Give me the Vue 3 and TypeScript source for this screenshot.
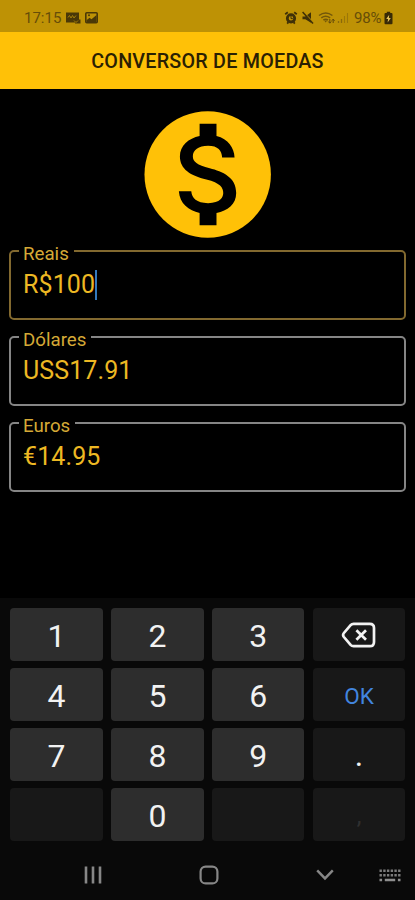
<script setup lang="ts">
interface Field {
  label: string
  value: string
  active: boolean
}

interface Key {
  label: string
  kind: 'digit' | 'dark' | 'ok' | 'erase' | 'point' | 'comma'
}

const fields: Field[] = [
  { label: 'Reais', value: 'R$100', active: true },
  { label: 'Dólares', value: 'USS17.91', active: false },
  { label: 'Euros', value: '€14.95', active: false },
]

const keys: Key[] = [
  { label: '1', kind: 'digit' },
  { label: '2', kind: 'digit' },
  { label: '3', kind: 'digit' },
  { label: '', kind: 'erase' },
  { label: '4', kind: 'digit' },
  { label: '5', kind: 'digit' },
  { label: '6', kind: 'digit' },
  { label: 'OK', kind: 'ok' },
  { label: '7', kind: 'digit' },
  { label: '8', kind: 'digit' },
  { label: '9', kind: 'digit' },
  { label: '.', kind: 'point' },
  { label: '', kind: 'dark' },
  { label: '0', kind: 'digit' },
  { label: '', kind: 'dark' },
  { label: ',', kind: 'comma' },
]
</script>

<template>
  <div class="screen">
    <div class="status">
      <span class="clock">17:15</span>
      <svg class="notice" width="34" height="14" viewBox="0 0 34 14">
        <path d="M1 1.5h13v7h1.5v4H10v-1H1z" fill="#4a3807" />
        <path d="M3 6.5l1.5-2 1.5 2.5 1.5-2.5L9 7l2-2.5M9 9.5l2 2 2-2" fill="none" stroke="#a57f08" stroke-width="1" />
        <rect x="20.8" y="1.8" width="11.4" height="10" rx="1" fill="none" stroke="#4a3807" stroke-width="1.6" />
        <path d="M21.5 11V9.2l3-2.4 2 1.4 5-4.2v7z" fill="#4a3807" />
        <circle cx="24" cy="4.3" r="1" fill="#4a3807" />
      </svg>
      <span class="grow"></span>
      <svg class="signals" width="66" height="16" viewBox="0 0 66 16">
        <g fill="none" stroke="#3f3007">
          <circle cx="7" cy="8.3" r="3.7" stroke-width="2.8" />
          <path d="M1.2 4.2l2.6-2M12.8 4.2l-2.6-2M3.2 13.6l1.2-1.4M10.8 13.6l-1.2-1.4" stroke-width="1.8" />
          <path d="M7 6v2.6h1.8" stroke-width="1" />
        </g>
        <path d="M18.5 6.5h2.8L27 2.2v10.6l-5.7-3.5h-2.8z" fill="#3f3007" />
        <path d="M18.9 1.3l10.8 11.5" stroke="#be9205" stroke-width="1.2" />
        <path d="M18.6 2L29 13.4" stroke="#3f3007" stroke-width="1.5" />
        <g fill="none" stroke="#72570a" stroke-width="1.5">
          <path d="M35 5.5q6.7-5.2 13.4 0M37.3 7.9q4.4-3.3 8.8 0M39.4 10q2.3-1.5 4.6 0" />
        </g>
        <path d="M40.2 10.5h3l-1.5 2z" fill="#72570a" />
        <path d="M45.8 9v4M44.3 11.5l1.5 1.7 1.5-1.7M49.2 13V9.3M47.8 10.7l1.4-1.6 1.4 1.6" fill="none" stroke="#62490a" stroke-width="1" />
        <path d="M54.5 13v-2M57.5 13V9" stroke="#8a6909" stroke-width="1.3" />
        <path d="M60.5 13V6M63.5 13V3" stroke="#9c7708" stroke-width="1.1" />
      </svg>
      <span class="percent">98%</span>
      <svg class="battery" width="9" height="14" viewBox="0 0 9 14">
        <path d="M2.8.8h3.4V2h1.3q1 0 1 1v9.2q0 1-1 1h-6q-1 0-1-1V3q0-1 1-1h1.3z" fill="#382a06" />
        <path d="M5.2 3.8L2.2 8h1.9l-.5 3.4 3.2-4.5H4.9z" fill="#e4c15b" />
      </svg>
    </div>

    <header class="appbar"><h1>CONVERSOR DE MOEDAS</h1></header>

    <main class="content">
      <svg class="coin" width="127" height="127" viewBox="0 0 127 127">
        <circle cx="63.7" cy="63.5" r="63.2" fill="#ffc107" />
        <path
          transform="translate(-.7 -4.1) scale(5.63)"
          d="M11.8 10.9c-2.27-.59-3-1.2-3-2.15 0-1.09 1.01-1.85 2.7-1.85 1.78 0 2.44.85 2.5 2.1h2.21c-.07-1.72-1.12-3.3-3.21-3.81V3h-3v2.16c-1.94.42-3.5 1.68-3.5 3.61 0 2.31 1.91 3.46 4.7 4.13 2.5.6 3 1.48 3 2.41 0 .69-.49 1.79-2.7 1.79-2.06 0-2.87-.92-2.98-2.1h-2.2c.12 2.19 1.76 3.42 3.68 3.83V21h3v-2.15c1.95-.37 3.5-1.5 3.5-3.55 0-2.84-2.43-3.81-4.7-4.4z"
        />
      </svg>

      <fieldset v-for="field in fields" :key="field.label" class="field" :class="{ active: field.active }">
        <legend>{{ field.label }}</legend>
        <div class="value">
          <span>{{ field.value }}</span>
          <i v-if="field.active" class="caret"></i>
        </div>
      </fieldset>
    </main>

    <section class="keyboard">
      <div class="keys">
        <div v-for="(key, index) in keys" :key="index" class="key" :class="key.kind">
          <svg v-if="key.kind === 'erase'" width="36" height="28" viewBox="0 0 36 28">
            <path
              d="M12.6 2.8h16.2q4.2 0 4.2 4.2v14q0 4.2-4.2 4.2H12.6q-1.8 0-3-1.3L2.9 16q-1.6-2 0-4L9.6 4.1q1.2-1.3 3-1.3z"
              fill="none" stroke="#f2f2f2" stroke-width="2.7"
            />
            <path d="M15.4 9.2l9.6 9.6M25 9.2l-9.6 9.6" stroke="#f2f2f2" stroke-width="2.7" />
          </svg>
          <span v-else>{{ key.label }}</span>
        </div>
      </div>

      <nav class="nav">
        <svg width="18" height="18" viewBox="0 0 18 18">
          <path d="M2 .5v17M9 .5v17M16 .5v17" stroke="#878787" stroke-width="2.6" />
        </svg>
        <svg class="home" width="20" height="20" viewBox="0 0 20 20">
          <rect x="1.6" y="1.6" width="16.8" height="16.8" rx="5" fill="none" stroke="#878787" stroke-width="2.2" />
        </svg>
        <svg class="hide" width="18" height="12" viewBox="0 0 18 12">
          <path d="M1.2 1.3L9 9.4l7.8-8.1" fill="none" stroke="#878787" stroke-width="2.4" />
        </svg>
        <svg class="layout" width="22" height="13" viewBox="0 0 22 13">
          <path
            d="M.5 1.8h21M.5 6.2h21"
            stroke="#7c7c7c" stroke-width="2.4" stroke-dasharray="2.4 1.32"
          />
          <path d="M.5 11h2.6M5.8 11h10.4M18.9 11h2.6" stroke="#8e8e8e" stroke-width="2.6" />
        </svg>
      </nav>
    </section>
  </div>
</template>

<style>
body {
  background: #000;
}
</style>

<style scoped>
.screen {
  width: 415px;
  height: 900px;
  display: flex;
  flex-direction: column;
  overflow: hidden;
  background: #000;
  font-family: Roboto, "Liberation Sans", sans-serif;
}
.status {
  height: 32px;
  box-sizing: border-box;
  padding: 3px 22px 0 24px;
  display: flex;
  align-items: center;
  background: #be9205;
  color: #664d08;
  font-size: 15px;
}
.clock {
  width: 38px;
}
.notice {
  margin-left: 3px;
}
.grow {
  flex: 1;
}
.signals {
  margin-right: 4px;
}
.percent {
  width: 29px;
  font-size: 15px;
  letter-spacing: -0.2px;
}
.battery {
  margin-left: 1px;
}
.appbar {
  height: 57px;
  box-sizing: border-box;
  padding-top: 2px;
  display: flex;
  align-items: center;
  justify-content: center;
  background: #ffc107;
}
h1 {
  margin: 0;
  font-size: 19.7px;
  font-weight: 500;
  letter-spacing: 0.25px;
  color: #2a2003;
}
.content {
  height: 509px;
  box-sizing: border-box;
  padding: 22px 9px 0;
  display: flex;
  flex-direction: column;
}
.coin {
  align-self: center;
  margin-bottom: 3px;
}
.field {
  box-sizing: border-box;
  height: 79px;
  min-width: 0;
  margin: 0 0 7px;
  padding: 0 0 0 8px;
  border: 2px solid #858585;
  border-radius: 5px;
  color: #edb823;
}
.field.active {
  border-color: #82692f;
}
legend {
  height: 20px;
  box-sizing: border-box;
  padding: 4px 5px 0 4px;
  font-size: 18.7px;
  line-height: 19px;
  color: #d5a936;
}
.value {
  display: flex;
  align-items: center;
  padding: 8px 0 0 4px;
  font-size: 25px;
  letter-spacing: 0.1px;
  line-height: 32px;
}
.caret {
  width: 2px;
  height: 30px;
  background: #3479bd;
}
.keyboard {
  height: 302px;
  box-sizing: border-box;
  padding: 10.4px 9.8px 0 10.4px;
  background: #090909;
}
.keys {
  display: grid;
  grid-template-columns: repeat(4, 1fr);
  grid-auto-rows: 52.6px;
  gap: 7.3px 8.6px;
}
.key {
  display: flex;
  align-items: center;
  justify-content: center;
  padding-top: 3px;
  box-sizing: border-box;
  border-radius: 4px;
  background: #181818;
  color: #f2f2f2;
  font-size: 32px;
}
.digit {
  background: #2d2d2d;
}
.erase {
  padding-top: 1px;
}
.point {
  padding-top: 1px;
}
.ok {
  font-size: 22.5px;
  color: #4285df;
}
.comma {
  color: #303030;
  font-size: 24px;
}
.nav {
  height: 69px;
  padding-left: 73.6px;
  display: flex;
  align-items: center;
}
.nav svg {
  flex: none;
}
.home {
  margin-left: 97px;
}
.hide {
  margin-left: 97px;
}
.layout {
  margin-left: 45px;
}
</style>
